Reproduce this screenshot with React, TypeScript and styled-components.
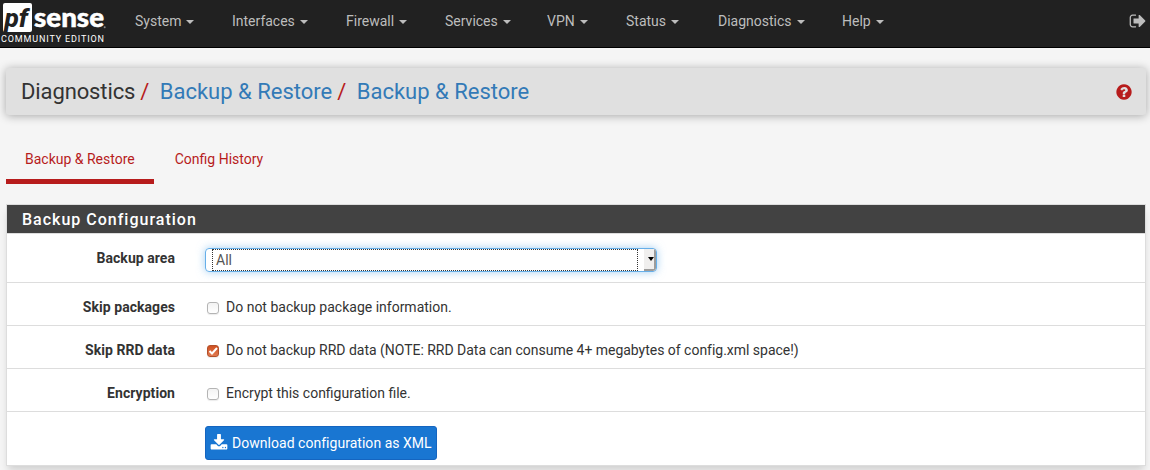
import React from "react";
import styled, { createGlobalStyle, css } from "styled-components";

const GlobalStyle = createGlobalStyle`
  *, *::before, *::after { box-sizing: border-box; }
  html, body { margin: 0; height: 100%; overflow: hidden; }
  body {
    background: #f5f5f5;
    color: #333;
    font: 14px/20px Roboto, "Liberation Sans", sans-serif;
  }
`;

const Navbar = styled.nav`
  display: flex;
  align-items: flex-start;
  height: 48px;
  background: #212121;
  border-bottom: 1px solid #000;
`;

const Brand = styled.a`
  display: block;
  width: 110px;
  height: 47px;
  flex: none;
`;

const Menu = styled.ul`
  display: flex;
  flex: 1;
  margin: 0;
  padding: 11px 0 0 25px;
  list-style: none;
`;

const MenuItem = styled.li<{ $width: number }>`
  display: flex;
  align-items: center;
  gap: 5px;
  flex: none;
  width: ${(p) => p.$width}px;
  height: 20px;
  color: #bdbdbd;
  white-space: nowrap;

  &::after {
    content: "";
    border-top: 4px solid;
    border-left: 4px solid transparent;
    border-right: 4px solid transparent;
    margin-top: 2px;
  }
`;

const Logout = styled.a`
  display: flex;
  padding: 12px 3px 0 0;
  color: #bdbdbd;
`;

const Icon = styled.svg<{ $size: number }>`
  display: block;
  flex: none;
  width: ${(p) => p.$size}px;
  height: ${(p) => p.$size}px;
  fill: currentColor;
`;

const Page = styled.main`
  padding: 20px 4px 0 6px;
`;

const PageHeader = styled.header`
  display: flex;
  align-items: center;
  justify-content: space-between;
  height: 47px;
  padding: 0 14px 0 15px;
  border-radius: 3px;
  background: #e0e0e0;
  box-shadow: 0 1px 10px rgba(0, 0, 0, 0.32);
`;

const Breadcrumb = styled.ol`
  display: flex;
  margin: 0;
  padding: 0;
  list-style: none;
  font-size: 22px;
  line-height: 30px;
`;

const Crumb = styled.li<{ $link?: boolean }>`
  white-space: nowrap;
  color: ${(p) => (p.$link ? "#337ab7" : "#333")};
  letter-spacing: ${(p) => (p.$link ? "0" : "-0.12px")};

  &:not(:last-child)::after {
    content: "/";
    padding: 0 10.5px 0 5px;
    color: #b71c1c;
  }
`;

const Help = styled.a`
  display: flex;
  margin-top: 1px;
  color: #b71c1c;
`;

const Tabs = styled.ul`
  display: flex;
  gap: 2px;
  margin: 19px 0 20px;
  padding: 0;
  list-style: none;
`;

const Tab = styled.li<{ $active?: boolean }>`
  height: 50px;
  padding: 15px 19px 0;
  color: #b71c1c;
  border-bottom: 5px solid ${(p) => (p.$active ? "#b71c1c" : "transparent")};
`;

const Panel = styled.section`
  background: #fff;
  border: 1px solid #ddd;
  box-shadow: 0 6px 8px -2px rgba(0, 0, 0, 0.16);
`;

const PanelHeading = styled.h2`
  height: 28px;
  margin: 0;
  padding: 1px 15px 0;
  background: #424242;
  color: #fff;
  font-size: 16px;
  font-weight: 500;
  line-height: 28px;
  letter-spacing: 1px;
`;

const Row = styled.div<{ $height: number }>`
  display: flex;
  height: ${(p) => p.$height}px;
  padding-top: 14px;
  border-top: 1px solid #ddd;
`;

const Label = styled.span`
  flex: none;
  width: 168px;
  margin-right: 30px;
  text-align: right;
  font-weight: 700;
  letter-spacing: 0.05px;
`;

const SelectBox = styled.div`
  display: flex;
  width: 452px;
  height: 24px;
  padding: 0 0 0 6px;
  border: 1px solid #66afe9;
  border-radius: 4px;
  overflow: hidden;
  color: #555;
  box-shadow: 0 0 8px rgba(102, 175, 233, 0.6);
`;

const SelectValue = styled.span`
  width: 426px;
  border: 1px dotted #333;
  padding-left: 3px;
  line-height: 21px;
`;

const SelectButton = styled.span`
  display: flex;
  align-items: center;
  justify-content: flex-end;
  width: 12px;
  margin-left: 6px;
  background: #f0efee;
  border-right: 2px solid #9d9c9b;
  border-bottom: 2px solid #9d9c9b;
  border-radius: 0 0 3px 0;

  &::after {
    content: "";
    border-top: 4px solid #000;
    border-left: 3.5px solid transparent;
    border-right: 3.5px solid transparent;
  }
`;

const Choice = styled.label`
  display: flex;
  align-items: flex-start;
  gap: 7px;
  padding-left: 2px;
  white-space: nowrap;
`;

const ChoiceText = styled.span<{ $tight?: boolean }>`
  letter-spacing: ${(p) => (p.$tight ? "-0.02px" : "0")};
`;

const Box = styled.span<{ $checked?: boolean }>`
  display: flex;
  flex: none;
  width: 12px;
  height: 12px;
  margin-top: 5px;
  border: 1px solid #b4b4b4;
  border-radius: 3px;
  background: linear-gradient(#f3f3f3, #fff);
  box-shadow: 0 1px 1px rgba(0, 0, 0, 0.08);
  ${(p) =>
    p.$checked &&
    css`
      border-color: #b3502a;
      background: linear-gradient(#cf5021, #e07a50);
    `}
`;

const Tick = styled.svg`
  width: 10px;
  height: 10px;
  fill: none;
  stroke: #fff;
  stroke-width: 2;
`;

const DownloadButton = styled.button`
  display: flex;
  align-items: center;
  gap: 4px;
  width: 232px;
  height: 34px;
  padding: 0 3px 0 4px;
  border: 1px solid #1565c0;
  border-radius: 3px;
  background: #1976d2;
  color: #fff;
  font: inherit;
  letter-spacing: 0.03px;
  white-space: nowrap;
`;

const menus: [string, number][] = [
  ["System", 97],
  ["Interfaces", 114],
  ["Firewall", 99],
  ["Services", 102],
  ["VPN", 79],
  ["Status", 92],
  ["Diagnostics", 124],
  ["Help", 60],
];

const options = [
  { label: "Skip packages", text: "Do not backup package information.", checked: false },
  {
    label: "Skip RRD data",
    text: "Do not backup RRD data (NOTE: RRD Data can consume 4+ megabytes of config.xml space!)",
    checked: true,
  },
  { label: "Encryption", text: "Encrypt this configuration file.", checked: false },
];

const Logo = () => (
  <svg width="110" height="47" viewBox="0 0 110 47">
    <rect x="3" y="3" width="29" height="29" rx="2" fill="#fff" />
    <text x="4.5" y="27" textLength="23.5" lengthAdjust="spacingAndGlyphs" fill="#212121" fontFamily="Roboto" fontWeight="800" fontStyle="italic" fontSize="26">
      pf
    </text>
    <text x="34" y="27" textLength="70" lengthAdjust="spacingAndGlyphs" fill="#fff" stroke="#fff" strokeWidth="0.5" fontFamily="Lato" fontWeight="900" fontSize="27">
      sense
    </text>
    <circle cx="104.7" cy="27.3" r="1" fill="#888" />
    <text x="1" y="42" textLength="103" fill="#fff" fontFamily="Roboto" fontSize="9">
      COMMUNITY EDITION
    </text>
  </svg>
);

const SignOutIcon = () => (
  <Icon $size={18} viewBox="0 0 1792 1792">
    <path d="M704 1440q0 4 1 20t.5 26.5-3 23.5-10 19.5-20.5 6.5h-320q-119 0-203.5-84.5t-84.5-203.5v-704q0-119 84.5-203.5t203.5-84.5h320q13 0 22.5 9.5t9.5 22.5q0 4 1 20t.5 26.5-3 23.5-10 19.5-20.5 6.5h-320q-66 0-113 47t-47 113v704q0 66 47 113t113 47h312l11.5 1 11.5 3 8 5.5 7 9 2 13.5zm928-544q0 26-19 45l-544 544q-19 19-45 19t-45-19-19-45v-288h-448q-26 0-45-19t-19-45v-384q0-26 19-45t45-19h448v-288q0-26 19-45t45-19 45 19l544 544q19 19 19 45z" />
  </Icon>
);

const QuestionIcon = () => (
  <Icon $size={16} viewBox="96 96 1600 1600">
    <path d="M1024 1376v-192q0-14-9-23t-23-9h-192q-14 0-23 9t-9 23v192q0 14 9 23t23 9h192q14 0 23-9t9-23zm256-672q0-88-55.5-163t-138.5-116-170-41q-243 0-371 213-15 24 8 42l132 100q7 6 19 6 16 0 25-12 53-68 86-92 34-24 86-24 48 0 85.5 26t37.5 59q0 38-20 61t-68 45q-63 28-115.5 86.5t-52.5 125.5v36q0 14 9 23t23 9h192q14 0 23-9t9-23q0-19 21.5-49.5t54.5-49.5q32-18 49-28.5t46-35 44.5-48 28-60.5 12.5-81zm384 192q0 209-103 385.5t-279.5 279.5-385.5 103-385.5-103-279.5-279.5-103-385.5 103-385.5 279.5-279.5 385.5-103 385.5 103 279.5 279.5 103 385.5z" />
  </Icon>
);

const DownloadIcon = () => (
  <Icon $size={18} viewBox="0 0 1792 1792">
    <path d="M1344 1344q0-26-19-45t-45-19-45 19-19 45 19 45 45 19 45-19 19-45zm256 0q0-26-19-45t-45-19-45 19-19 45 19 45 45 19 45-19 19-45zm128-224v320q0 40-28 68t-68 28h-1472q-40 0-68-28t-28-68v-320q0-40 28-68t68-28h465l135 136q58 56 136 56t136-56l136-136h464q40 0 68 28t28 68zm-325-569q17 41-14 70l-448 448q-18 19-45 19t-45-19l-448-448q-31-29-14-70 17-39 59-39h256v-448q0-26 19-45t45-19h256q26 0 45 19t19 45v448h256q42 0 59 39z" />
  </Icon>
);

export default function App() {
  return (
    <>
      <GlobalStyle />
      <Navbar>
        <Brand>
          <Logo />
        </Brand>
        <Menu>
          {menus.map(([name, width]) => (
            <MenuItem key={name} $width={width}>
              {name}
            </MenuItem>
          ))}
        </Menu>
        <Logout>
          <SignOutIcon />
        </Logout>
      </Navbar>
      <Page>
        <PageHeader>
          <Breadcrumb>
            <Crumb>Diagnostics</Crumb>
            <Crumb $link>Backup &amp; Restore</Crumb>
            <Crumb $link>Backup &amp; Restore</Crumb>
          </Breadcrumb>
          <Help>
            <QuestionIcon />
          </Help>
        </PageHeader>
        <Tabs>
          <Tab $active>Backup &amp; Restore</Tab>
          <Tab>Config History</Tab>
        </Tabs>
        <Panel>
          <PanelHeading>Backup Configuration</PanelHeading>
          <Row $height={49}>
            <Label>Backup area</Label>
            <SelectBox>
              <SelectValue>All</SelectValue>
              <SelectButton />
            </SelectBox>
          </Row>
          {options.map((o) => (
            <Row key={o.label} $height={43}>
              <Label>{o.label}</Label>
              <Choice>
                <Box $checked={o.checked}>
                  {o.checked && (
                    <Tick viewBox="0 0 10 10">
                      <path d="M1.5 5 4 7.5 9 2" />
                    </Tick>
                  )}
                </Box>
                <ChoiceText $tight={o.checked}>{o.text}</ChoiceText>
              </Choice>
            </Row>
          ))}
          <Row $height={54}>
            <Label />
            <DownloadButton>
              <DownloadIcon />
              Download configuration as XML
            </DownloadButton>
          </Row>
        </Panel>
      </Page>
    </>
  );
}
